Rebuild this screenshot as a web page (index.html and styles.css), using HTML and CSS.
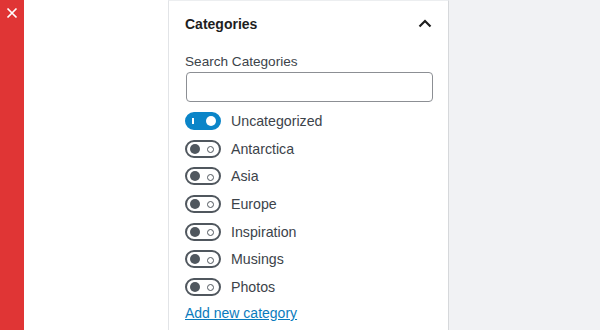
FILE: index.html
```html
<!DOCTYPE html>
<html lang="en">
<head>
    <meta charset="UTF-8">
    <title>Categories</title>
    <link rel="stylesheet" href="styles.css">
</head>
<body>
    <div class="layout">
        <!-- Close strip -->
        <div class="close-strip">
            <svg class="close-icon" width="12" height="12" viewBox="0 0 12 12">
                <path d="M1.5 1.5L10.5 10.5M10.5 1.5L1.5 10.5" stroke="#fff" stroke-width="1.7" fill="none"/>
            </svg>
        </div>

        <div class="spacer"></div>

        <!-- Categories panel -->
        <div class="panel">
            <div class="panel-header">
                <h2>Categories</h2>
                <svg class="chevron" width="14" height="9" viewBox="0 0 14 9">
                    <polyline points="1.5,7.5 7,2 12.5,7.5" stroke="#1e1e1e" stroke-width="2.2" fill="none"/>
                </svg>
            </div>

            <label class="search-label">Search Categories</label>
            <input type="text" class="search-input">

            <ul class="category-list">
                <li class="category"><span class="toggle on"></span>Uncategorized</li>
                <li class="category"><span class="toggle"></span>Antarctica</li>
                <li class="category"><span class="toggle"></span>Asia</li>
                <li class="category"><span class="toggle"></span>Europe</li>
                <li class="category"><span class="toggle"></span>Inspiration</li>
                <li class="category"><span class="toggle"></span>Musings</li>
                <li class="category"><span class="toggle"></span>Photos</li>
            </ul>

            <a href="#" class="add-link">Add new category</a>
        </div>

        <div class="rest"></div>
    </div>
</body>
</html>
```

FILE: styles.css
```css
* {
    margin: 0;
    padding: 0;
    box-sizing: border-box;
    font-family: 'Liberation Sans', Arial, sans-serif;
}

body {
    width: 600px;
    height: 330px;
    overflow: hidden;
    background: #fff;
}

.layout {
    display: flex;
    height: 330px;
}

/* Left red strip */
.close-strip {
    width: 24px;
    background: #e03535;
    display: flex;
    justify-content: center;
    align-items: flex-start;
    padding-top: 7px;
}

.spacer {
    width: 144px;
    background: #fff;
}

/* Panel */
.panel {
    width: 281px;
    border-left: 1px solid #e2e4e7;
    border-right: 1px solid #d6d8db;
    border-top: 1px solid #eceef0;
    padding: 0 15px 0 16px;
    display: flex;
    flex-direction: column;
}

.panel-header {
    height: 45px;
    display: flex;
    align-items: center;
    justify-content: space-between;
}

.panel-header h2 {
    font-size: 14px;
    font-weight: 700;
    color: #1e1e1e;
}

.chevron {
    margin-right: 1px;
}

.search-label {
    margin-top: 7px;
    font-size: 13.6px;
    line-height: 18px;
    color: #3c434a;
}

.search-input {
    margin-top: 1px;
    margin-left: 1px;
    height: 30px;
    width: 247px;
    border: 1px solid #8c8f94;
    border-radius: 4px;
    background: #fff;
    outline: none;
}

.category-list {
    list-style: none;
    margin-top: 10px;
    display: flex;
    flex-direction: column;
    gap: 9.67px;
}

.category {
    display: flex;
    align-items: center;
    gap: 10px;
    height: 18px;
    font-size: 14.2px;
    color: #3c434a;
}

/* Toggle switch */
.toggle {
    position: relative;
    width: 36px;
    height: 18px;
    border: 2px solid #50575e;
    border-radius: 9px;
    background: #fff;
}

.toggle::before {
    content: "";
    position: absolute;
    left: 3px;
    top: 2px;
    width: 10px;
    height: 10px;
    border-radius: 50%;
    background: #50575e;
}

.toggle::after {
    content: "";
    position: absolute;
    right: 5px;
    top: 4.5px;
    width: 5px;
    height: 5px;
    border-radius: 50%;
    border: 1.5px solid #50575e;
}

.toggle.on {
    background: #0b85c8;
    border-color: #0b85c8;
}

.toggle.on::before {
    left: auto;
    right: 3px;
    background: #fff;
}

.toggle.on::after {
    right: auto;
    left: 5px;
    top: 4px;
    width: 2px;
    height: 6px;
    border-radius: 0;
    border: none;
    background: #fff;
}

.add-link {
    margin-top: 9px;
    font-size: 14px;
    color: #0a7bbd;
    text-decoration: underline;
}

.rest {
    flex: 1;
    background: #f1f2f4;
}
```
